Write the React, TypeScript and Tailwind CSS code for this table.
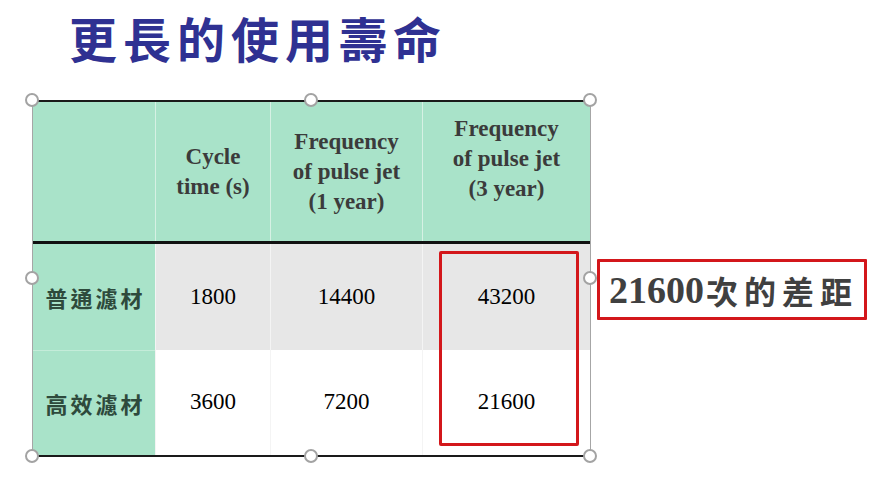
const serif = "font-['Liberation_Serif','Times_New_Roman','Noto_Sans_CJK_TC',serif]";
const cjk = "font-['Noto_Sans_CJK_TC','Noto_Sans_CJK_SC',sans-serif]";

const header = [
  ['Cycle', 'time (s)'],
  ['Frequency', 'of pulse jet', '(1 year)'],
  ['Frequency', 'of pulse jet', '(3 year)'],
];

const rows = [
  { label: '普通濾材', values: ['1800', '14400', '43200'], bg: 'bg-[#e7e7e7]' },
  { label: '高效濾材', values: ['3600', '7200', '21600'], bg: 'bg-white' },
];

const handles = [
  'left-[-7px] top-[-7px]',
  'left-[272px] top-[-7px]',
  'left-[551px] top-[-7px]',
  'left-[-7px] top-[171px]',
  'left-[551px] top-[171px]',
  'left-[-7px] top-[349px]',
  'left-[272px] top-[349px]',
  'left-[551px] top-[349px]',
];

function Handle({ className }: { className: string }) {
  return (
    <div
      className={`absolute h-[14px] w-[14px] rounded-full border-2 border-[#a3a3a3] bg-white ${className}`}
    />
  );
}

export default function App() {
  return (
    <div className="h-[479px] w-[889px] overflow-hidden bg-white">
      <div className="h-[100px] pl-[69px] pt-[11px]">
        <h1
          className={`${cjk} text-[48px] font-bold leading-[52px] tracking-[6px] text-[#2f3192]`}
        >
          更長的使用壽命
        </h1>
      </div>

      <div className="flex items-start">
        {/* table with selection frame */}
        <div className="relative ml-[32px] w-[559px]">
          <div className="border-x border-t-2 border-b-2 border-x-[#a6a6a6] border-t-[#1a1a1a] border-b-[#1a1a1a]">
            {/* header row */}
            <div className="grid h-[142px] grid-cols-[122px_115px_152px_168px] border-b-[3px] border-b-[#111] bg-[#a9e3c9]">
              <div />
              {header.map((lines, i) => (
                <div
                  key={i}
                  className={`flex flex-col items-center justify-center border-l border-l-[#d6f1e4] ${serif} text-[23px] font-bold leading-[30px] text-[#3b3b3b] ${i === 2 ? 'pb-[26px]' : ''}`}
                >
                  {lines.map((l) => (
                    <span key={l}>{l}</span>
                  ))}
                </div>
              ))}
            </div>

            {rows.map((row, r) => (
              <div
                key={row.label}
                className={`grid grid-cols-[122px_115px_152px_168px] ${r === 0 ? 'h-[106px]' : 'h-[105px]'}`}
              >
                <div
                  className={`flex items-center justify-center pl-[3px] bg-[#a9e3c9] ${r === 1 ? 'border-t border-t-[#c4ecd9]' : ''} ${cjk} text-[22px] font-bold tracking-[3px] text-[#2e4a3c]`}
                >
                  {row.label}
                </div>
                {row.values.map((v, i) => (
                  <div
                    key={i}
                    className={`flex items-center justify-center border-l border-l-[#f4f4f4] ${row.bg} ${serif} text-[23px] text-black`}
                  >
                    {v}
                  </div>
                ))}
              </div>
            ))}
          </div>

          {/* highlight around the 3 year column */}
          <div className="absolute left-[407px] top-[151px] h-[195px] w-[140px] rounded-[2px] border-[3px] border-[#d3171b]" />

          {handles.map((h) => (
            <Handle key={h} className={h} />
          ))}
        </div>

        <div className="ml-[6px] mt-[159px] flex h-[61px] w-[270px] items-center rounded-[1px] border-[3px] border-[#d3171b] pl-[9px] text-[#404040]">
          <span className={`${serif} text-[38px] font-bold leading-none`}>21600</span>
          <span className={`${cjk} ml-[2px] text-[32px] font-bold leading-none tracking-[6px]`}>
            次的差距
          </span>
        </div>
      </div>
    </div>
  );
}
